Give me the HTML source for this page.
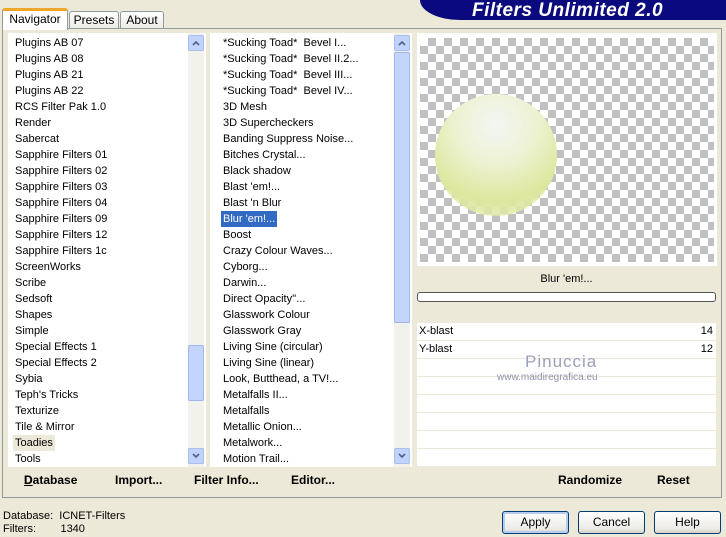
<!DOCTYPE html>
<html><head><style>
*{margin:0;padding:0;box-sizing:border-box}
body{width:726px;height:537px;background:#ECE9D8;font-family:"Liberation Sans",sans-serif;font-size:11px;color:#000;position:relative;overflow:hidden}
.a{position:absolute}
.list{background:#fff}
.it{position:absolute;left:7px;height:16px;line-height:16px;white-space:nowrap}
.sb{position:absolute;width:16px;background:#F3F1EC}
.arr{position:absolute;left:0;width:16px;height:16px;background:#C1D3FB;border:1px solid #A8BEF0;border-radius:2px}
.arr svg{position:absolute;left:3px;top:4px}
.thumb{position:absolute;left:0;width:16px;background:#C4D5FC;border:1px solid #9FB6EC;border-radius:2px}
.btn{position:absolute;height:23px;border:1px solid #003C74;border-radius:3px;background:linear-gradient(#fff,#ECEBE6 80%,#D6D0C5);text-align:center;line-height:21px;font-size:12px}
.bb{position:absolute;font-weight:bold;font-size:12px}
.row{position:absolute;left:417px;width:299px;height:17px;background:#fff;line-height:17px}
</style></head><body>
<div class="a" style="left:420px;top:0;width:306px;height:20px;background:#0A0A7E;border-bottom-left-radius:40px 20px"></div>
<div class="a" style="left:472px;top:0;font:italic bold 19px 'Liberation Sans',sans-serif;color:#fff;letter-spacing:0.5px">Filters Unlimited 2.0</div>
<div class="a" style="left:2px;top:28px;width:720px;height:470px;border:1px solid #919B9C;background:#ECE9D8"></div>
<div class="a" style="left:2px;top:8px;width:66px;height:22px;background:#fff;border:1px solid #919B9C;border-bottom:none;border-top:3px solid #F0A628;border-radius:3px 3px 0 0;text-align:center;line-height:17px;font-size:12px">Navigator</div>
<div class="a" style="left:69px;top:11px;width:50px;height:17px;background:linear-gradient(#fff,#ECEBE6);border:1px solid #919B9C;border-bottom:none;border-radius:3px 3px 0 0;text-align:center;line-height:17px;font-size:12px">Presets</div>
<div class="a" style="left:120px;top:11px;width:44px;height:17px;background:linear-gradient(#fff,#ECEBE6);border:1px solid #919B9C;border-bottom:none;border-radius:3px 3px 0 0;text-align:center;line-height:17px;font-size:12px">About</div>
<div class="a list" style="left:8px;top:33px;width:198px;height:434px">
<div class="it" style="top:2px">Plugins AB 07</div>
<div class="it" style="top:18px">Plugins AB 08</div>
<div class="it" style="top:34px">Plugins AB 21</div>
<div class="it" style="top:50px">Plugins AB 22</div>
<div class="it" style="top:66px">RCS Filter Pak 1.0</div>
<div class="it" style="top:82px">Render</div>
<div class="it" style="top:98px">Sabercat</div>
<div class="it" style="top:114px">Sapphire Filters 01</div>
<div class="it" style="top:130px">Sapphire Filters 02</div>
<div class="it" style="top:146px">Sapphire Filters 03</div>
<div class="it" style="top:162px">Sapphire Filters 04</div>
<div class="it" style="top:178px">Sapphire Filters 09</div>
<div class="it" style="top:194px">Sapphire Filters 12</div>
<div class="it" style="top:210px">Sapphire Filters 1c</div>
<div class="it" style="top:226px">ScreenWorks</div>
<div class="it" style="top:242px">Scribe</div>
<div class="it" style="top:258px">Sedsoft</div>
<div class="it" style="top:274px">Shapes</div>
<div class="it" style="top:290px">Simple</div>
<div class="it" style="top:306px">Special Effects 1</div>
<div class="it" style="top:322px">Special Effects 2</div>
<div class="it" style="top:338px">Sybia</div>
<div class="it" style="top:354px">Teph's Tricks</div>
<div class="it" style="top:370px">Texturize</div>
<div class="it" style="top:386px">Tile &amp; Mirror</div>
<div class="it" style="top:402px;left:5px;padding:0 2px;background:#ECE9D8">Toadies</div>
<div class="it" style="top:418px">Tools</div>
<div class="sb" style="left:180px;top:0;height:434px">
<div class="arr" style="top:2px"><svg width="8" height="6"><path d="M1 5L4 2L7 5" stroke="#4D6185" stroke-width="1.6" fill="none"/></svg></div>
<div class="thumb" style="top:312px;height:56px"></div>
<div class="arr" style="top:415px"><svg width="8" height="6"><path d="M1 1L4 4L7 1" stroke="#4D6185" stroke-width="1.6" fill="none"/></svg></div>
</div></div>
<div class="a list" style="left:210px;top:33px;width:202px;height:434px">
<div class="it" style="left:13px;top:2px">*Sucking Toad*&nbsp; Bevel I...</div>
<div class="it" style="left:13px;top:18px">*Sucking Toad*&nbsp; Bevel II.2...</div>
<div class="it" style="left:13px;top:34px">*Sucking Toad*&nbsp; Bevel III...</div>
<div class="it" style="left:13px;top:50px">*Sucking Toad*&nbsp; Bevel IV...</div>
<div class="it" style="left:13px;top:66px">3D Mesh</div>
<div class="it" style="left:13px;top:82px">3D Supercheckers</div>
<div class="it" style="left:13px;top:98px">Banding Suppress Noise...</div>
<div class="it" style="left:13px;top:114px">Bitches Crystal...</div>
<div class="it" style="left:13px;top:130px">Black shadow</div>
<div class="it" style="left:13px;top:146px">Blast 'em!...</div>
<div class="it" style="left:13px;top:162px">Blast 'n Blur</div>
<div class="it" style="left:11px;top:178px;padding:0 2px;background:#316AC5;color:#fff">Blur 'em!...</div>
<div class="it" style="left:13px;top:194px">Boost</div>
<div class="it" style="left:13px;top:210px">Crazy Colour Waves...</div>
<div class="it" style="left:13px;top:226px">Cyborg...</div>
<div class="it" style="left:13px;top:242px">Darwin...</div>
<div class="it" style="left:13px;top:258px">Direct Opacity''...</div>
<div class="it" style="left:13px;top:274px">Glasswork Colour</div>
<div class="it" style="left:13px;top:290px">Glasswork Gray</div>
<div class="it" style="left:13px;top:306px">Living Sine (circular)</div>
<div class="it" style="left:13px;top:322px">Living Sine (linear)</div>
<div class="it" style="left:13px;top:338px">Look, Butthead, a TV!...</div>
<div class="it" style="left:13px;top:354px">Metalfalls II...</div>
<div class="it" style="left:13px;top:370px">Metalfalls</div>
<div class="it" style="left:13px;top:386px">Metallic Onion...</div>
<div class="it" style="left:13px;top:402px">Metalwork...</div>
<div class="it" style="left:13px;top:418px">Motion Trail...</div>
<div class="sb" style="left:184px;top:0;height:434px">
<div class="arr" style="top:2px"><svg width="8" height="6"><path d="M1 5L4 2L7 5" stroke="#4D6185" stroke-width="1.6" fill="none"/></svg></div>
<div class="thumb" style="top:19px;height:271px"></div>
<div class="arr" style="top:415px"><svg width="8" height="6"><path d="M1 1L4 4L7 1" stroke="#4D6185" stroke-width="1.6" fill="none"/></svg></div>
</div></div>
<div class="a" style="left:415px;top:33px;width:303px;height:434px;background:#ECE9D8"></div>
<div class="a" style="left:417px;top:33px;width:300px;height:233px;background:#fff"></div>
<div class="a" style="left:420px;top:38px;width:294px;height:224px;background-color:#fff;background-image:linear-gradient(45deg,#C0C0C0 25%,transparent 25%,transparent 75%,#C0C0C0 75%),linear-gradient(45deg,#C0C0C0 25%,transparent 25%,transparent 75%,#C0C0C0 75%);background-size:16px 16px;background-position:0 0,8px 8px"></div>
<div class="a" style="left:435px;top:94px;width:122px;height:122px;border-radius:50%;background:radial-gradient(circle at 50% 25%,#F2F6F4 0%,#EEF2D4 35%,#DDE79E 70%,rgba(230,236,170,0.7) 88%,rgba(255,255,255,0) 100%)"></div>
<div class="a" style="left:417px;top:273px;width:299px;text-align:center;font-size:11px">Blur 'em!...</div>
<div class="a" style="left:417px;top:292px;width:299px;height:10px;border:1px solid #555;border-radius:3px;background:#fff"></div>
<div class="row" style="top:323px"><span style="position:absolute;left:2px">X-blast</span><span style="position:absolute;right:3px">14</span></div>
<div class="row" style="top:341px"><span style="position:absolute;left:2px">Y-blast</span><span style="position:absolute;right:3px">12</span></div>
<div class="row" style="top:359px"></div>
<div class="row" style="top:377px"></div>
<div class="row" style="top:395px"></div>
<div class="row" style="top:413px"></div>
<div class="row" style="top:431px"></div>
<div class="row" style="top:449px"></div>
<div class="a" style="left:525px;top:352px;font-size:17px;color:#9AA0B8;letter-spacing:1px">Pinuccia</div>
<div class="a" style="left:497px;top:372px;font-size:10px;color:#8E93A8">www.maidiregrafica.eu</div>
<div class="bb" style="left:24px;top:473px;text-decoration:underline">D</div>
<div class="bb" style="left:24px;top:473px">Database</div>
<div class="bb" style="left:115px;top:473px">Import...</div>
<div class="bb" style="left:194px;top:473px">Filter Info...</div>
<div class="bb" style="left:291px;top:473px">Editor...</div>
<div class="bb" style="left:558px;top:473px">Randomize</div>
<div class="bb" style="left:657px;top:473px">Reset</div>
<div class="a" style="left:3px;top:510px;line-height:13px">Database:&nbsp; ICNET-Filters<br>Filters:&nbsp;&nbsp;&nbsp;&nbsp;&nbsp;&nbsp;&nbsp; 1340</div>
<div class="btn" style="left:502px;top:511px;width:67px;box-shadow:inset 0 0 0 2px #B8CCF0">Apply</div>
<div class="btn" style="left:578px;top:511px;width:67px">Cancel</div>
<div class="btn" style="left:654px;top:511px;width:67px">Help</div>
</body></html>
